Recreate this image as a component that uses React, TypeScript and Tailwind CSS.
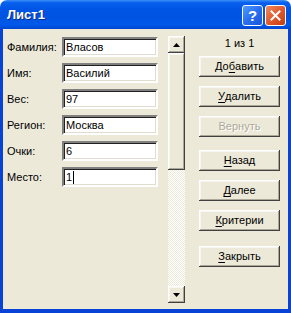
import React from "react";

const raised =
  "bg-[#ece9d8] shadow-[inset_-1px_-1px_0_#404040,inset_1px_1px_0_#ffffff,inset_-2px_-2px_0_#aca899,inset_2px_2px_0_#f7f6f0]";

function Field({ label, value, cursor }: { label: string; value: string; cursor?: boolean }) {
  return (
    <div className="flex items-center h-[20px]">
      <div className="w-[55px] text-[11px] leading-[13px] text-black">{label}</div>
      <div className="w-[96px] h-[20px] bg-white border-2 border-t-[#808080] border-l-[#808080] border-r-white border-b-[#ffffff] shadow-[inset_1px_1px_0_#202020,inset_-1px_-1px_0_#e0ddd0] flex items-center pl-[2px] text-[11px] leading-[13px] text-black">
        <span>{value}</span>
        {cursor && <span className="inline-block w-px h-[13px] bg-black ml-[1px]" />}
      </div>
    </div>
  );
}

function Btn({ children, disabled, className = "" }: { children: React.ReactNode; disabled?: boolean; className?: string }) {
  return (
    <div
      className={`h-[21px] w-[81px] ${raised} flex items-center justify-center text-[11px] leading-[13px] ${
        disabled ? "text-[#aca899] [text-shadow:1px_1px_0_#ffffff]" : "text-black"
      } ${className}`}
    >
      {children}
    </div>
  );
}

function U({ children }: { children: React.ReactNode }) {
  return <span className="underline underline-offset-[2px]">{children}</span>;
}

export default function App() {
  return (
    <div className="w-[291px] h-[313px] flex flex-col font-['Liberation_Sans',Arial,sans-serif] bg-white">
      {/* title bar */}
      <div className="h-[29px] rounded-t-[7px] flex items-center justify-between pl-[7px] pr-[5px] bg-[linear-gradient(to_bottom,#3d8ff7_0%,#0a61ee_9%,#0055e5_30%,#0053e1_60%,#0059ea_85%,#0046d0_100%)]">
        <span className="text-white font-bold text-[13px] leading-[16px] [text-shadow:1px_1px_0_#0a2a8a] mt-[1px]">
          Лист1
        </span>
        <div className="flex gap-[2px] mt-[1px]">
          <div className="w-[21px] h-[21px] rounded-[3px] border border-white bg-[linear-gradient(135deg,#4f9bff_0%,#2a6ef0_50%,#1a55d8_100%)] flex items-center justify-center text-white font-bold text-[15px] leading-none">
            ?
          </div>
          <div className="w-[21px] h-[21px] rounded-[3px] border border-white bg-[linear-gradient(135deg,#f08a5f_0%,#e05a2e_50%,#c33c14_100%)] flex items-center justify-center">
            <svg width="11" height="11" viewBox="0 0 11 11">
              <path d="M1.5 1.5 L9.5 9.5 M9.5 1.5 L1.5 9.5" stroke="#ffffff" strokeWidth="2" strokeLinecap="square" />
            </svg>
          </div>
        </div>
      </div>
      {/* body */}
      <div className="flex-1 flex border-x-[3px] border-b-[4px] border-[#0842d6] bg-[#ece9d8]">
        {/* fields */}
        <div className="pl-[4px] pt-[8px] flex flex-col gap-[6px]">
          <Field label="Фамилия:" value="Власов" />
          <Field label="Имя:" value="Василий" />
          <Field label="Вес:" value="97" />
          <Field label="Регион:" value="Москва" />
          <Field label="Очки:" value="6" />
          <Field label="Место:" value="1" cursor />
        </div>
        {/* scrollbar */}
        <div className="ml-[10px] mt-[7px] mb-[6px] w-[17px] flex flex-col">
          <div className={`h-[17px] ${raised} flex items-center justify-center`}>
            <svg width="7" height="4" viewBox="0 0 7 4">
              <path d="M3.5 0 L7 4 L0 4 Z" fill="#000" />
            </svg>
          </div>
          <div className={`h-[117px] ${raised}`} />
          <div className="flex-1 bg-[repeating-conic-gradient(#ffffff_0%_25%,#ece9d8_0%_50%)] bg-[length:2px_2px]" />
          <div className={`h-[17px] ${raised} flex items-center justify-center`}>
            <svg width="7" height="4" viewBox="0 0 7 4">
              <path d="M0 0 L7 0 L3.5 4 Z" fill="#000" />
            </svg>
          </div>
        </div>
        {/* buttons */}
        <div className="ml-[14px] pt-[7px] flex flex-col">
          <div className="h-[14px] text-center text-[11px] leading-[14px] text-black">1 из 1</div>
          <Btn className="mt-[6px]">
            До<U>б</U>авить
          </Btn>
          <Btn className="mt-[9px]">
            <U>У</U>далить
          </Btn>
          <Btn className="mt-[9px]" disabled>
            Вернуть
          </Btn>
          <Btn className="mt-[13px]">
            <U>Н</U>азад
          </Btn>
          <Btn className="mt-[9px]">
            <U>Д</U>алее
          </Btn>
          <Btn className="mt-[9px]">
            <U>К</U>ритерии
          </Btn>
          <Btn className="mt-[15px]">
            <U>З</U>акрыть
          </Btn>
        </div>
      </div>
    </div>
  );
}
